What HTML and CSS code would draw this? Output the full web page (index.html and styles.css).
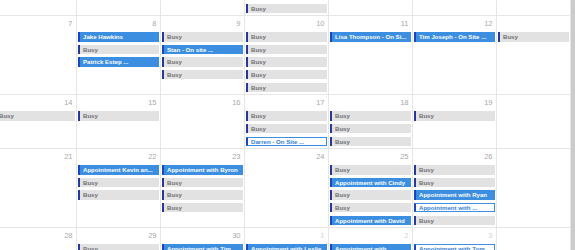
FILE: index.html
```html
<!DOCTYPE html>
<html>
<head>
<meta charset="utf-8">
<link rel="stylesheet" href="styles.css">
</head>
<body>
<div class="page">
  <div class="viewport">
    <div class="month">
      <div class="week">
        <div class="day"><div class="num"></div></div>
        <div class="day"><div class="num"></div></div>
        <div class="day"><div class="num"></div></div>
        <div class="day"><div class="num"></div><div class="ev busy">Busy</div><div class="ev busy">Busy</div></div>
        <div class="day"><div class="num"></div></div>
        <div class="day"><div class="num"></div><div class="ev outline">Appointment with ...</div></div>
        <div class="day"><div class="num"></div></div>
      </div>
      <div class="week">
        <div class="day"><div class="num">7</div></div>
        <div class="day"><div class="num">8</div><div class="ev appt">Jake Hawkins</div><div class="ev busy">Busy</div><div class="ev appt">Patrick Estep ...</div></div>
        <div class="day"><div class="num">9</div><div class="ev busy">Busy</div><div class="ev appt">Stan - On site ...</div><div class="ev busy">Busy</div><div class="ev busy">Busy</div></div>
        <div class="day"><div class="num">10</div><div class="ev busy">Busy</div><div class="ev busy">Busy</div><div class="ev busy">Busy</div><div class="ev busy">Busy</div><div class="ev busy">Busy</div></div>
        <div class="day"><div class="num">11</div><div class="ev appt">Lisa Thompson - On Si...</div></div>
        <div class="day"><div class="num">12</div><div class="ev appt">Tim Joseph - On Site ...</div></div>
        <div class="day"><div class="num"></div><div class="ev busy">Busy</div></div>
      </div>
      <div class="week">
        <div class="day"><div class="num">14</div><div class="ev busy">Busy</div></div>
        <div class="day"><div class="num">15</div><div class="ev busy">Busy</div></div>
        <div class="day"><div class="num">16</div></div>
        <div class="day"><div class="num">17</div><div class="ev busy">Busy</div><div class="ev busy">Busy</div><div class="ev outline">Darren - On Site ...</div></div>
        <div class="day"><div class="num">18</div><div class="ev busy">Busy</div><div class="ev busy">Busy</div><div class="ev busy">Busy</div></div>
        <div class="day"><div class="num">19</div><div class="ev busy">Busy</div></div>
        <div class="day"><div class="num"></div></div>
      </div>
      <div class="week">
        <div class="day"><div class="num">21</div></div>
        <div class="day"><div class="num">22</div><div class="ev appt">Appointment Kevin an...</div><div class="ev busy">Busy</div><div class="ev busy">Busy</div></div>
        <div class="day"><div class="num">23</div><div class="ev appt">Appointment with Byron</div><div class="ev busy">Busy</div><div class="ev busy">Busy</div><div class="ev busy">Busy</div></div>
        <div class="day"><div class="num">24</div></div>
        <div class="day"><div class="num">25</div><div class="ev busy">Busy</div><div class="ev appt">Appointment with Cindy</div><div class="ev busy">Busy</div><div class="ev busy">Busy</div><div class="ev appt">Appointment with David</div></div>
        <div class="day"><div class="num">26</div><div class="ev busy">Busy</div><div class="ev busy">Busy</div><div class="ev appt">Appointment with Ryan</div><div class="ev outline">Appointment with ...</div><div class="ev busy">Busy</div></div>
        <div class="day"><div class="num"></div></div>
      </div>
      <div class="week">
        <div class="day"><div class="num">28</div></div>
        <div class="day"><div class="num">29</div><div class="ev busy">Busy</div></div>
        <div class="day"><div class="num">30</div><div class="ev appt">Appointment with Tim</div></div>
        <div class="day"><div class="num next">1</div><div class="ev appt">Appointment with Leslie</div></div>
        <div class="day"><div class="num next">2</div><div class="ev appt">Appointment with ...</div></div>
        <div class="day"><div class="num next">3</div><div class="ev outline">Appointment with Tom</div></div>
        <div class="day"><div class="num"></div></div>
      </div>
    </div>
  </div>
  <div class="scrollbar"></div>
</div>
</body>
</html>
```

FILE: styles.css
```css
html, body {
  margin: 0;
  padding: 0;
  background: #ffffff;
}

.page {
  display: flex;
  width: 580px;
  height: 250px;
  overflow: hidden;
  font-family: "Liberation Sans", Arial, sans-serif;
}

.viewport {
  flex: 0 0 571px;
  height: 250px;
  overflow: hidden;
}

.scrollbar {
  flex: 0 0 4px;
  height: 250px;
  background: #cbcbcb;
}

.month {
  margin-left: -7px;
  margin-top: -25px;
}

.week {
  display: grid;
  grid-template-columns: repeat(6, 84px) 74px;
}

.day {
  box-sizing: border-box;
  border-right: 1px solid #e6e6e6;
  border-bottom: 1px solid #e6e6e6;
  padding: 0 1px 2.4px 1px;
  min-width: 0;
}

.num {
  box-sizing: border-box;
  height: 16px;
  padding-top: 3.3px;
  padding-right: 2.5px;
  line-height: 8.4px;
  font-size: 7.5px;
  text-align: right;
  color: #a8a8a8;
}

.num.next {
  color: #d2d2d2;
}

.ev {
  box-sizing: border-box;
  height: 9.3px;
  line-height: 9.3px;
  margin-bottom: 3.3px;
  padding-left: 3px;
  font-size: 6.1px;
  font-weight: bold;
  white-space: nowrap;
  overflow: hidden;
}

.ev:last-child {
  margin-bottom: 0;
}

.appt {
  background: #3b8ee0;
  border-left: 2px solid #1d44c0;
  color: #ffffff;
}

.busy {
  background: #e2e2e2;
  border-left: 2px solid #26389f;
  color: #6f6f6f;
}

.outline {
  background: #ffffff;
  border: 1px solid #3b8ee0;
  border-left: 2px solid #1d44c0;
  line-height: 7.3px;
  color: #3380d6;
}
```
